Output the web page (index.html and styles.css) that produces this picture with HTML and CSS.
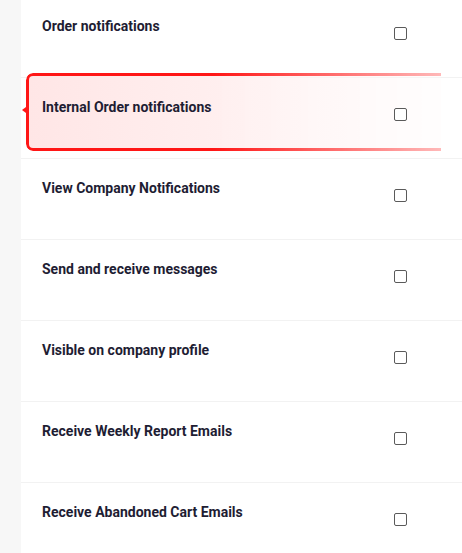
FILE: index.html
```html
<!DOCTYPE html>
<html>
<head lang="en">
    <meta charset="UTF-8">
    <title>Notifications</title>
    <link rel="stylesheet" href="styles.css">
</head>
<body>
<div class="page">
    <ul class="list">
        <li class="row first">
            <span class="label">Order notifications</span>
            <input type="checkbox" class="check">
        </li>
        <li class="row marked">
            <span class="mark"></span>
            <span class="notch"></span>
            <span class="label">Internal Order notifications</span>
            <input type="checkbox" class="check">
        </li>
        <li class="row">
            <span class="label">View Company Notifications</span>
            <input type="checkbox" class="check">
        </li>
        <li class="row">
            <span class="label">Send and receive messages</span>
            <input type="checkbox" class="check">
        </li>
        <li class="row">
            <span class="label">Visible on company profile</span>
            <input type="checkbox" class="check">
        </li>
        <li class="row">
            <span class="label">Receive Weekly Report Emails</span>
            <input type="checkbox" class="check">
        </li>
        <li class="row">
            <span class="label">Receive Abandoned Cart Emails</span>
            <input type="checkbox" class="check">
        </li>
    </ul>
</div>
</body>
</html>
```
FILE: styles.css
```css
*{
    margin: 0;
    padding: 0;
    box-sizing: border-box;
}
ul{
    list-style: none;
}
body{
    background: #f7f7f7;
    font-family: Roboto, "Liberation Sans", sans-serif;
    overflow: hidden;
}
.page{
    display: flow-root;
    margin-left: 21px;
    background: #fff;
    height: 553px;
}
.list{
    margin-top: -3px;
}
.row{
    position: relative;
    display: flex;
    justify-content: space-between;
    align-items: flex-start;
    height: 81px;
    padding: 20px 55px 0 21px;
    border-bottom: 1px solid #f2f2f2;
}
.label{
    position: relative;
    font-size: 14px;
    font-weight: 700;
    color: #1e1d33;
    line-height: 18px;
}
.check{
    position: relative;
    appearance: none;
    width: 13px;
    height: 13px;
    margin-top: 10px;
    border: 1px solid #5a5a5a;
    border-radius: 2px;
    background: #fff;
}
.mark{
    position: absolute;
    left: 5px;
    top: -5px;
    width: 415px;
    height: 78px;
    border: 3px solid #ff1616;
    border-right: 0;
    border-radius: 7px 0 0 7px;
    background: linear-gradient(to right, #ffe6e6, #fff9f9);
    -webkit-mask-image: linear-gradient(to right, #000 45%, rgba(0,0,0,0.3));
    mask-image: linear-gradient(to right, #000 45%, rgba(0,0,0,0.3));
}
.notch{
    position: absolute;
    left: 1px;
    top: 29px;
    border-top: 3px solid transparent;
    border-bottom: 3px solid transparent;
    border-right: 4px solid #ff1616;
}
```
